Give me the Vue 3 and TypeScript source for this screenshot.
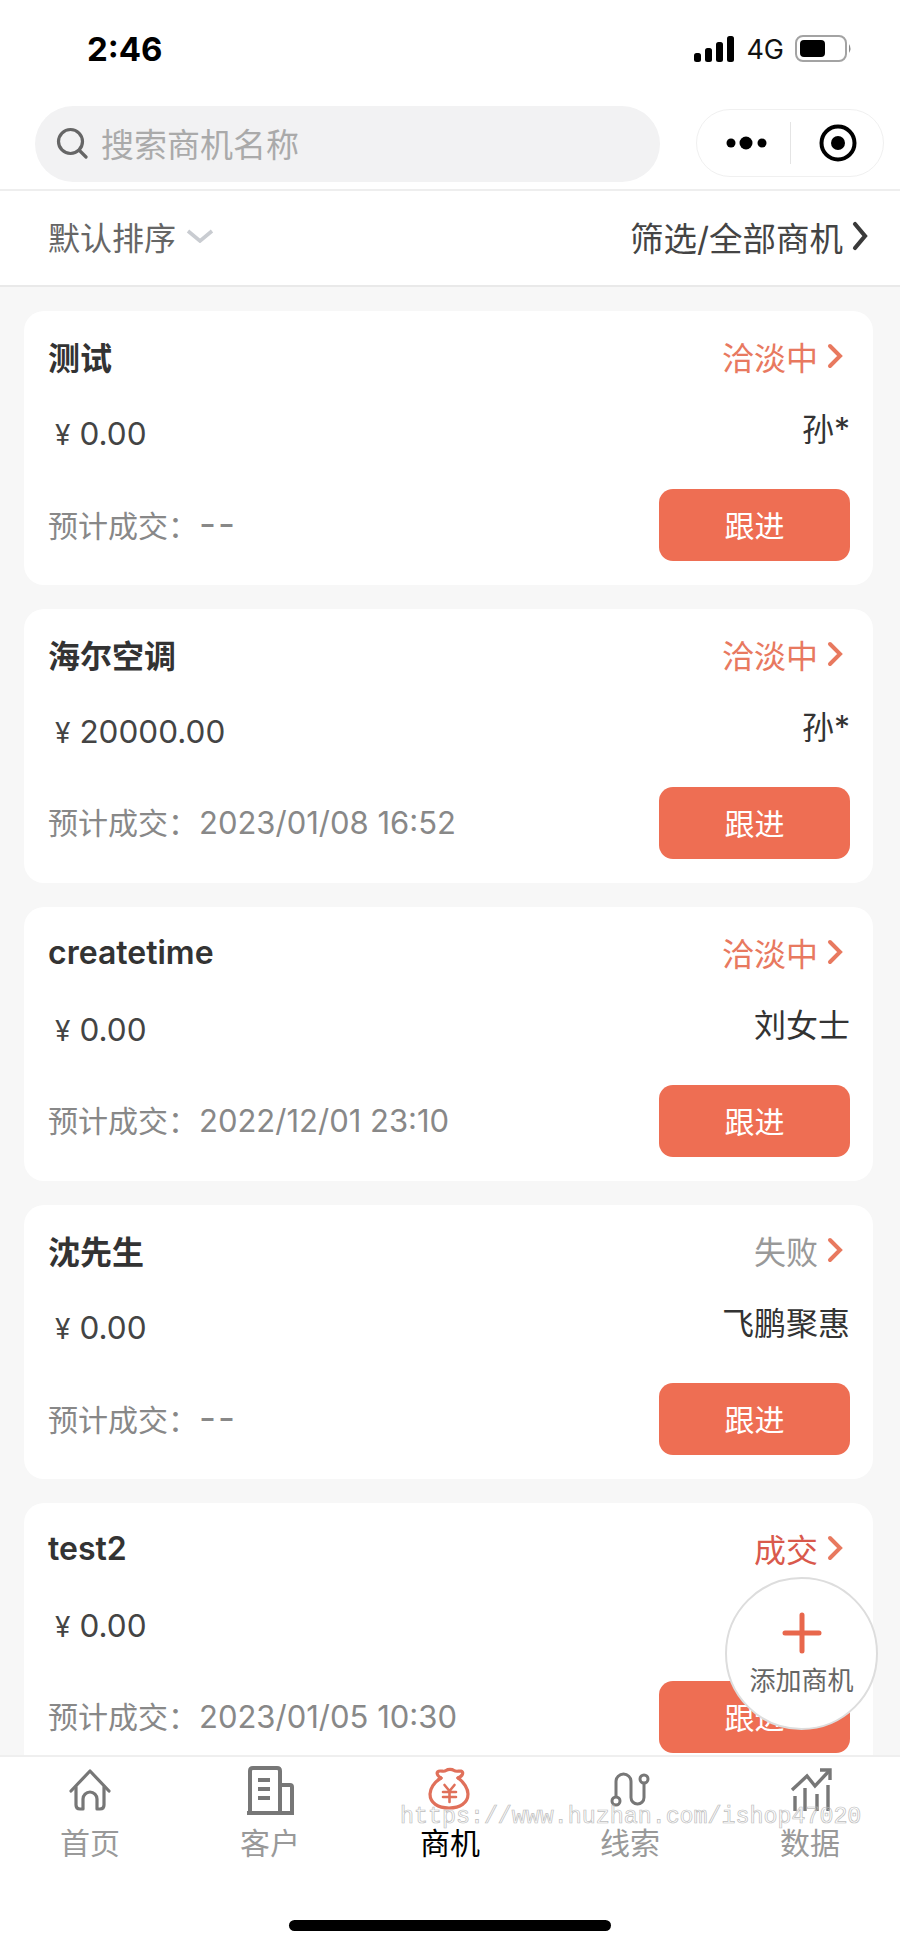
<script setup lang="ts">
interface Deal {
  title: string
  amount: string
  owner: string
  date: string
  status: string
  tone: string
}

const deals: Deal[] = [
  { title: '测试', amount: '0.00', owner: '孙*', date: '--', status: '洽淡中', tone: 'talking' },
  { title: '海尔空调', amount: '20000.00', owner: '孙*', date: '2023/01/08 16:52', status: '洽淡中', tone: 'talking' },
  { title: 'createtime', amount: '0.00', owner: '刘女士', date: '2022/12/01 23:10', status: '洽淡中', tone: 'talking' },
  { title: '沈先生', amount: '0.00', owner: '飞鹏聚惠', date: '--', status: '失败', tone: 'failed' },
  { title: 'test2', amount: '0.00', owner: '', date: '2023/01/05 10:30', status: '成交', tone: 'won' }
]
</script>

<template>
  <div class="page">
    <div class="status-bar">
      <span class="time">2:46</span>
      <div class="status-icons">
        <svg width="42" height="28" viewBox="0 0 42 28">
          <rect x="1" y="18" width="7" height="9" rx="2.5" />
          <rect x="12" y="13" width="7" height="14" rx="2.5" />
          <rect x="23" y="7" width="7" height="20" rx="2.5" />
          <rect x="34" y="1" width="7" height="26" rx="2.5" />
        </svg>
        <span class="net">4G</span>
        <svg width="58" height="28" viewBox="0 0 58 28">
          <rect x="1" y="1" width="50" height="25" rx="7" fill="#fff" stroke="#a3a3a3" stroke-width="2" />
          <rect x="5" y="5" width="25" height="17" rx="4" />
          <path d="M54 9 Q57 13.5 54 18 Z" fill="#8a8a8a" />
        </svg>
      </div>
    </div>

    <div class="nav">
      <div class="search">
        <svg width="32" height="32" viewBox="0 0 32 32" fill="none" stroke="#666" stroke-width="3.2" stroke-linecap="round">
          <circle cx="14.5" cy="14.5" r="12" />
          <path d="M23.5 23.5 L30 30" />
        </svg>
        <span>搜索商机名称</span>
      </div>
      <div class="capsule">
        <svg width="44" height="16" viewBox="0 0 44 16">
          <circle cx="6" cy="8" r="4.5" />
          <circle cx="21" cy="8" r="6.5" />
          <circle cx="37" cy="8" r="4.5" />
        </svg>
        <i class="capsule-line"></i>
        <svg width="38" height="38" viewBox="0 0 38 38">
          <circle cx="19" cy="19" r="16.5" fill="none" stroke="#000" stroke-width="4" />
          <circle cx="19" cy="19" r="7" />
        </svg>
      </div>
    </div>

    <div class="sort-bar">
      <div class="sort-left">
        <span>默认排序</span>
        <svg width="28" height="14" viewBox="0 0 28 14" fill="none" stroke="#c9ccd1" stroke-width="3.6">
          <path d="M2 2 L14 12 L26 2" />
        </svg>
      </div>
      <div class="sort-right">
        <span>筛选/全部商机</span>
        <svg width="16" height="30" viewBox="0 0 16 30" fill="none" stroke="#3a3a3a" stroke-width="4.2" stroke-linecap="round">
          <path d="M3 3 L13 15 L3 27" />
        </svg>
      </div>
    </div>

    <div class="list">
      <div v-for="deal in deals" :key="deal.title" class="card">
        <div class="row-top">
          <span class="title">{{ deal.title }}</span>
          <div class="state" :class="deal.tone">
            <span>{{ deal.status }}</span>
            <svg width="16" height="28" viewBox="0 0 16 28" fill="none" stroke="#e8795f" stroke-width="4" stroke-linecap="round">
              <path d="M3 4 L13 14 L3 24" />
            </svg>
          </div>
        </div>
        <div class="row-mid">
          <span class="amount"><em>¥</em>{{ deal.amount }}</span>
          <span class="owner">{{ deal.owner }}</span>
        </div>
        <div class="row-bottom">
          <span class="date" :class="{ none: deal.date === '--' }"><b>预计成交：</b><u>{{ deal.date }}</u></span>
          <button class="follow">跟进</button>
        </div>
      </div>
    </div>

    <div class="tabbar">
      <div class="tab">
        <svg width="60" height="60" viewBox="0 0 60 60" fill="none" stroke="#777" stroke-width="3.2" stroke-linecap="round" stroke-linejoin="round">
          <path d="M11 30 L30 10 L49 30" />
          <path d="M16 26 V44 q0 4 4 4 H23 V38 a7 7 0 0 1 14 0 V48 H40 q4 0 4 -4 V26" />
        </svg>
        <span>首页</span>
      </div>
      <div class="tab">
        <svg width="60" height="60" viewBox="0 0 60 60" fill="none" stroke="#777" stroke-width="4">
          <path d="M10 52 V10 q0 -3 3 -3 H37 q3 0 3 3 V52" />
          <path d="M40 24 H50 q2 0 2 2 V52" />
          <path d="M7 52 H54" />
          <path d="M18 19 H30 M18 28 H30 M18 37 H30" />
        </svg>
        <span>客户</span>
      </div>
      <div class="tab active">
        <svg width="60" height="60" viewBox="0 0 60 60" fill="none" stroke="#e0705a" stroke-width="3.2" stroke-linecap="round" stroke-linejoin="round">
          <path d="M21 17 C16 14 16 10 20 10 C23 10 24 11 26 9.5 C28 8 32 8 34 9.5 C36 11 38 10 41 10 C44 11 43 15 38 17" />
          <path d="M21 17 C14 21 10 28 10 33 C10 42 18 47 29 47 C40 47 48 42 48 33 C48 28 44 21 38 17" />
          <path d="M24.5 24 L29.5 30 L34.5 24 M23 31 H36 M23 36 H36 M29.5 30 V41" stroke-width="2.6" />
        </svg>
        <span>商机</span>
      </div>
      <div class="tab">
        <svg width="60" height="60" viewBox="0 0 60 60" fill="none" stroke="#777" stroke-width="3">
          <circle cx="16" cy="40" r="4" />
          <circle cx="44" cy="18" r="4" />
          <path d="M16 36 V20.5 a7.5 7.5 0 0 1 15 0 V36.5 a6.5 6.5 0 0 0 13 0 V22" />
        </svg>
        <span>线索</span>
      </div>
      <div class="tab">
        <svg width="60" height="60" viewBox="0 0 60 60" fill="none" stroke="#777" stroke-width="3.4">
          <path d="M12 29 L27 15 L35 25 L49 10" />
          <path d="M40 9 H50 V19" />
          <path d="M15 35 V50 M25 27 V50 M37 33 V50 M48 24 V50" />
        </svg>
        <span>数据</span>
      </div>
    </div>

    <div class="home-bar"></div>

    <div class="fab">
      <svg width="40" height="42" viewBox="0 0 40 42" stroke="#e8674c" stroke-width="5" stroke-linecap="round">
        <path d="M20 3 V39 M3 21 H37" />
      </svg>
      <span>添加商机</span>
    </div>

    <div class="watermark">https://www.huzhan.com/ishop47020</div>
  </div>
</template>

<style scoped>
.page {
  position: relative;
  display: flex;
  flex-direction: column;
  width: 900px;
  height: 1948px;
  overflow: hidden;
  background: #f7f7f7;
  font-family: Inter, "Noto Sans CJK SC", sans-serif;
  color: #333;
}

.status-bar {
  display: flex;
  justify-content: space-between;
  align-items: center;
  height: 98px;
  padding: 0 47px 0 87px;
  background: #fff;
}

.time {
  font-size: 33px;
  font-weight: 700;
  color: #000;
}

.status-icons {
  display: flex;
  align-items: center;
  gap: 11px;
}

.net {
  font-size: 27px;
  color: #111;
}

.nav {
  display: flex;
  align-items: flex-start;
  justify-content: space-between;
  flex: none;
  height: 93px;
  padding: 8px 16px 0 35px;
  box-sizing: border-box;
  background: #fff;
  border-bottom: 2px solid #eee;
}

.search {
  display: flex;
  align-items: center;
  gap: 13px;
  width: 625px;
  height: 76px;
  padding: 0 0 2px 21px;
  box-sizing: border-box;
  border-radius: 38px;
  background: #f2f2f3;
  font-size: 33px;
  color: #aaa;
}

.capsule {
  display: flex;
  align-items: center;
  justify-content: space-between;
  width: 188px;
  height: 68px;
  margin-top: 3px;
  padding: 0 26px 0 28px;
  box-sizing: border-box;
  border: 1px solid #f0f0f0;
  border-radius: 34px;
}

.capsule-line {
  width: 1px;
  height: 42px;
  margin-right: 8px;
  background: #e4e4e4;
}

.sort-bar {
  display: flex;
  justify-content: space-between;
  align-items: center;
  flex: none;
  height: 96px;
  padding: 0 32px 4px 48px;
  box-sizing: border-box;
  background: #fff;
  border-bottom: 2px solid #e9e9e9;
  font-size: 32px;
}

.sort-left {
  display: flex;
  align-items: center;
  gap: 10px;
  color: #666;
}

.sort-right {
  display: flex;
  align-items: center;
  gap: 9px;
  font-size: 33.5px;
  color: #444;
}

.list {
  flex: 1;
  min-height: 0;
  overflow: hidden;
  padding: 24px 27px 0 24px;
}

.card {
  height: 274px;
  margin-bottom: 24px;
  padding: 20px 23px 0 24px;
  box-sizing: border-box;
  border-radius: 20px;
  background: #fff;
}

.row-top {
  display: flex;
  justify-content: space-between;
  align-items: center;
  height: 50px;
}

.title {
  font-size: 32px;
  font-weight: 600;
  color: #333;
}

.state {
  display: flex;
  align-items: center;
  gap: 9px;
  padding-right: 7px;
  font-size: 32px;
}

.talking {
  color: #e8795f;
}

.failed {
  color: #999;
}

.won {
  color: #d9594c;
}

.row-mid {
  display: flex;
  justify-content: space-between;
  align-items: flex-start;
  height: 50px;
  margin-top: 28px;
}

.amount {
  padding-left: 7px;
  font-size: 31.5px;
  line-height: 50px;
  color: #444;
}

.amount em {
  margin-right: 9px;
  font-size: 28px;
  font-style: normal;
}

.owner {
  font-size: 32px;
  line-height: 42px;
  color: #333;
}

.row-bottom {
  display: flex;
  justify-content: space-between;
  align-items: center;
  margin-top: 30px;
}

.date {
  padding-bottom: 4px;
  font-size: 31px;
  color: #888;
}

.date b {
  margin-right: 1px;
  font-size: 30px;
  font-weight: 400;
}

.date u {
  text-decoration: none;
}

.date.none u {
  font-size: 37px;
  letter-spacing: 2px;
}

.follow {
  width: 191px;
  height: 72px;
  padding: 0 0 3px;
  border: 0;
  border-radius: 14px;
  background: #ee6e53;
  font-family: inherit;
  font-size: 30px;
  color: #fff;
}

.tabbar {
  display: grid;
  grid-template-columns: repeat(5, 180px);
  flex: none;
  height: 193px;
  padding-top: 4px;
  box-sizing: border-box;
  background: #fff;
  border-top: 2px solid #efefef;
}

.tab {
  display: flex;
  flex-direction: column;
  align-items: center;
  font-size: 30px;
  line-height: 30px;
  color: #999;
}

.tab svg {
  margin-bottom: 7px;
}

.tab.active {
  color: #000;
}

.home-bar {
  position: absolute;
  left: 289px;
  top: 1920px;
  width: 322px;
  height: 11px;
  border-radius: 6px;
  background: #000;
}

.fab {
  position: absolute;
  left: 725px;
  top: 1577px;
  display: flex;
  flex-direction: column;
  align-items: center;
  width: 153px;
  height: 153px;
  padding-top: 33px;
  box-sizing: border-box;
  border: 2px solid #ddd;
  border-radius: 50%;
  background: #fff;
  font-size: 26px;
  line-height: 36px;
  color: #666;
}

.fab svg {
  margin-bottom: 9px;
}

.watermark {
  position: absolute;
  left: 400px;
  top: 1806px;
  font-family: "Liberation Mono", monospace;
  font-size: 23.3px;
  line-height: 22px;
  color: transparent;
  -webkit-text-stroke: 0.7px #bdbdbd;
  white-space: nowrap;
}
</style>
